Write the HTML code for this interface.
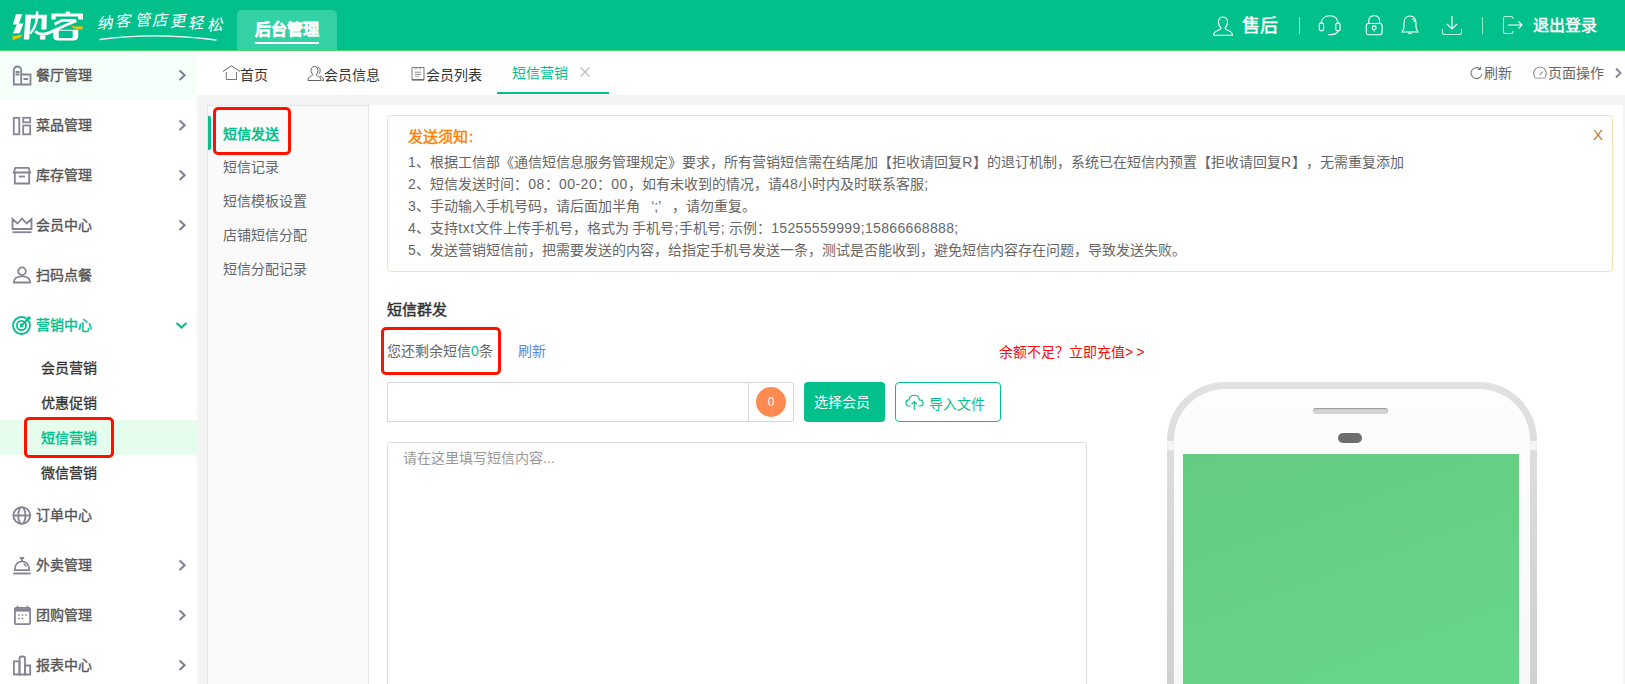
<!DOCTYPE html>
<html lang="zh-CN"><head><meta charset="utf-8">
<style>
*{margin:0;padding:0;box-sizing:border-box}
html,body{text-spacing-trim:space-all;width:1625px;height:684px;overflow:hidden;background:#f4f4f4;font-family:"Liberation Sans",sans-serif;font-size:14px;color:#333}
.a{position:absolute;white-space:nowrap}
#hdr{position:absolute;left:0;top:0;width:1625px;height:50px;background:#02c08c}
#hdrline{position:absolute;left:0;top:50px;width:1625px;height:1px;background:#4ed66c}
#side{position:absolute;left:0;top:51px;width:197px;height:633px;background:#fff}
.mi{position:absolute;left:0;width:197px;height:50px}
.mi .t{position:absolute;left:36px;top:0;line-height:50px;font-size:14px;color:#555;-webkit-text-stroke:0.35px #555}
.mi svg{position:absolute;left:12px;top:15px}
.mi .arr{position:absolute;left:176px;top:19px}
.si{position:absolute;left:0;width:197px;height:35px}
.si .t{position:absolute;left:41px;top:0.5px;line-height:35px;color:#333;-webkit-text-stroke:0.3px #333}
#tabs{position:absolute;left:197px;top:51px;width:1428px;height:44px;background:#fff}
.tab{position:absolute;top:0;height:44px;line-height:44px;color:#333}
#sub{position:absolute;left:207px;top:105px;width:162px;height:579px;background:#fafafa;border:1px solid #e6e6e6;border-bottom:none}
.sb{position:absolute;left:15px;height:34px;line-height:34px;color:#666}
#main{position:absolute;left:369px;top:105px;width:1254px;height:579px;background:#fff}
#notice{position:absolute;left:387px;top:115px;width:1226px;height:157px;border:1px solid #fbdcb4;border-radius:4px;background:#fff}
.nl{position:absolute;left:20px;color:#666;line-height:22px}
.n{letter-spacing:0.5px}
.redbox{position:absolute;border:3px solid #ff1100;border-radius:5px}
</style></head><body>
<div id="hdr">
  <!-- logo -->
  <svg class="a" style="left:0;top:0" width="90" height="50" viewBox="0 0 90 50">
    <g fill="#fff">
      <polygon points="15.9,14.2 22.2,14.2 19,23.4 23.4,23.4 19.6,33.3 13,33.3 16.8,24.6 13,24.6"/>
      <polygon points="25.7,14.8 31.3,14.8 29.1,39.6 23.7,39.6"/>
      <polygon points="25.7,14.8 47,14.8 46.8,18.4 25.7,18.4"/>
      <polygon points="41.7,18.3 46.8,18.3 46.4,29.5 41.3,29.5"/>
      <path d="M37.1 11.2 C37.1 20 36.5 26.5 30.2 33.5" stroke="#fff" stroke-width="2.5" fill="none"/>
      <polygon points="39.9,35.4 45.3,35.4 45.3,39.6 39.9,39.6"/>
      <polygon points="51.4,13.4 83,13.4 83,19.4 78.2,19.4 78.2,16.6 55.6,16.6 55.6,19.4 51.4,19.4"/>
      <polygon points="65.6,11.6 70,11.6 70,13.6 65.6,13.6"/>
      <path d="M54.5 24.2 L62 20.4 L76 20.4" stroke="#fff" stroke-width="2.7" fill="none" stroke-linejoin="round"/>
      <path d="M35 31.2 C39 34.6 45 34.6 50 32.4 C55 30.2 62 26.5 76.5 20.8" stroke="#fff" stroke-width="2.8" fill="none"/>
      <path d="M53.2 29.8 H78.2 V36 C78.2 39 76 40.6 73 40.6 H58 C55 40.6 53.2 39 53.2 36 Z M58.7 30.8 V36.8 C58.7 37.6 59.3 38 60 38 H71.5 C72.3 38 72.7 37.6 72.7 36.8 V30.8 Z" fill-rule="evenodd"/>
    </g>
    <path d="M12.2 36.6 C16 36 19 35.2 22.4 34.6 C22 36.2 21 37.2 19.5 37.8 C17 38.8 14.5 39.6 12.6 40 Z" fill="#f9c000"/>
    <path d="M70.8 25.4 C73.5 26.2 76 26.8 82.9 26.2 L82.2 29.6 C78.5 29.6 75 28.8 73 27.8 Z" fill="#f9c000"/>
  </svg>
  <div class="a" style="left:97.5px;top:14.7px;font-size:15.5px;line-height:16px;color:#fff;transform:skewX(-14deg) rotate(-4deg)">纳</div><div class="a" style="left:115.5px;top:13.0px;font-size:15.5px;line-height:16px;color:#fff;transform:skewX(-14deg) rotate(-4deg)">客</div><div class="a" style="left:135.5px;top:11.7px;font-size:15.5px;line-height:16px;color:#fff;transform:skewX(-14deg) rotate(-4deg)">管</div><div class="a" style="left:153.0px;top:12.1px;font-size:15.5px;line-height:16px;color:#fff;transform:skewX(-14deg) rotate(-4deg)">店</div><div class="a" style="left:170.5px;top:12.6px;font-size:15.5px;line-height:16px;color:#fff;transform:skewX(-14deg) rotate(-4deg)">更</div><div class="a" style="left:189.0px;top:15.1px;font-size:15.5px;line-height:16px;color:#fff;transform:skewX(-14deg) rotate(-4deg)">轻</div><div class="a" style="left:207.5px;top:17.3px;font-size:15.5px;line-height:16px;color:#fff;transform:skewX(-14deg) rotate(-4deg)">松</div>
  <svg class="a" style="left:98px;top:32px" width="122" height="10" viewBox="0 0 122 10"><path d="M2 7.5 Q55 0 118 8" stroke="#fff" stroke-width="1.3" fill="none" stroke-linecap="round"/></svg>
  <div class="a" style="left:237px;top:10px;width:100px;height:40px;background:#35d1a6;border-radius:5px 5px 0 0"></div>
  <div class="a" style="left:255px;top:15px;font-size:16px;font-weight:bold;color:#fff;line-height:30px;-webkit-text-stroke:0.4px #fff">后台管理</div>
  <div class="a" style="left:255px;top:42px;width:64px;height:2px;background:#fff"></div>

  <!-- right icons -->
  <svg class="a" style="left:1212px;top:15px" width="22" height="22" viewBox="0 0 22 22" fill="none" stroke="#fff" stroke-width="1.1">
    <path d="M11 2 C7.5 2 6.5 5 6.5 7.5 C6.5 10 8 12 9 13 C9 14 8 14.5 6 15.5 C3 16.5 1.5 18 1.5 20.3 L20.5 20.3 C20.5 18 19 16.5 16 15.5 C14 14.5 13 14 13 13 C14 12 15.5 10 15.5 7.5 C15.5 5 14.5 2 11 2Z"/>
  </svg>
  <div class="a" style="left:1242px;top:13px;font-size:18px;-webkit-text-stroke:0.45px #fff;color:#fff;line-height:26px">售后</div>
  <div class="a" style="left:1299px;top:17px;width:1px;height:17px;background:#9be6cc"></div>
  <svg class="a" style="left:1300px;top:0" width="100" height="50" viewBox="1300 0 100 50" fill="none" stroke="#fff" stroke-width="1.1">
    <path d="M1321.2 23 V24 C1321.2 19 1324.5 15.8 1329.7 15.8 C1334.9 15.8 1338 19 1338 24 V23"/>
    <rect x="1319.3" y="22.8" width="4.3" height="8" rx="2.1"/>
    <rect x="1335.8" y="22.8" width="4.3" height="8" rx="2.1"/>
    <path d="M1338.3 31 C1337.5 33.5 1335 34.8 1328 34.8"/>
    <path d="M1368.8 23.5 V21 C1368.8 17.8 1371 15.8 1374.2 15.8 C1377.4 15.8 1379.6 17.8 1379.6 21 V23.5"/>
    <rect x="1366.3" y="23.5" width="15.8" height="11.2" rx="2.2"/>
    <circle cx="1374.2" cy="27.8" r="1.9"/>
    <path d="M1374.2 29.7 V31.6"/>
  </svg>
  <svg class="a" style="left:1400px;top:14px" width="20" height="22" viewBox="0 0 20 22" fill="none" stroke="#fff" stroke-width="1.1">
    <path d="M10 2 C6 2 4 5 4 9 V13 C4 15 3 16.5 2 18 H18 C17 16.5 16 15 16 13 V9 C16 5 14 2 10 2Z"/>
    <path d="M8.5 18.5 C8.5 20 11.5 20 11.5 18.5"/>
    <path d="M12.5 4.5 C14 5.5 14.5 7 14.5 8" />
  </svg>
  <svg class="a" style="left:1441px;top:15px" width="22" height="21" viewBox="0 0 22 21" fill="none" stroke="#fff" stroke-width="1.1">
    <path d="M11 1 V14 M6 9 L11 14 L16 9"/>
    <path d="M1.5 14 V17.5 C1.5 19 2.5 19.5 3.5 19.5 H18.5 C19.5 19.5 20.5 19 20.5 17.5 V14" stroke="#b8f0dc"/>
  </svg>
  <div class="a" style="left:1482px;top:17px;width:1px;height:17px;background:#9be6cc"></div>
  <svg class="a" style="left:1502px;top:15px" width="22" height="20" viewBox="0 0 22 20" fill="none" stroke="#fff" stroke-width="1.1">
    <path d="M11 4 V3.5 C11 2.5 10 1.5 9 1.5 H3.5 C2.5 1.5 1.5 2.5 1.5 3.5 V16.5 C1.5 17.5 2.5 18.5 3.5 18.5 H9 C10 18.5 11 17.5 11 16.5 V16" stroke="#b8f0dc"/>
    <path d="M6 10 H20 M16.5 6.5 L20 10 L16.5 13.5"/>
  </svg>
  <div class="a" style="left:1533px;top:13px;font-size:16px;-webkit-text-stroke:0.45px #fff;color:#fff;line-height:26px">退出登录</div>
</div>
<div id="hdrline"></div>

<div id="side">
  <div class="mi" style="top:0;background:#f6fefa;height:49px"></div>
</div>
<!-- menu items (absolute page coords) -->
<div class="mi" style="top:50px">
  <svg style="left:12px;top:15px" width="20" height="21" viewBox="0 0 20 21" fill="none" stroke="#858494" stroke-width="1.8">
    <path d="M1.8 19.5 V5 C1.8 3 3.5 1.5 5.5 1.5 C7.5 1.5 9.2 3 9.2 5 V19.5 Z"/>
    <path d="M9.2 9.5 H18.5 V19.5 H9.2"/>
    <path d="M3.5 7 H7.5 M3.5 9.5 H7.5 M11.5 14 H16"/>
  </svg>
  <div class="t">餐厅管理</div>
  <svg class="arr" width="12" height="13" viewBox="0 0 12 13"><path d="M3.6 1.6 L8.6 6.3 L3.6 11" stroke="#7d8090" stroke-width="2.1" fill="none"/></svg>
</div>
<div class="mi" style="top:100px">
  <svg style="left:12px;top:16px" width="20" height="20" viewBox="0 0 20 20" fill="none" stroke="#858494" stroke-width="1.8">
    <rect x="1.8" y="1.8" width="5.5" height="16.5"/>
    <rect x="11.2" y="1.8" width="7" height="4.5"/>
    <rect x="11.2" y="9.5" width="7" height="8.8"/>
  </svg>
  <div class="t">菜品管理</div>
  <svg class="arr" width="12" height="13" viewBox="0 0 12 13"><path d="M3.6 1.6 L8.6 6.3 L3.6 11" stroke="#7d8090" stroke-width="2.1" fill="none"/></svg>
</div>
<div class="mi" style="top:150px">
  <svg style="left:12px;top:16px" width="20" height="20" viewBox="0 0 20 20" fill="none" stroke="#858494" stroke-width="1.8">
    <path d="M1.8 6.5 L3.5 1.8 H16.5 L18.2 6.5 Z"/>
    <path d="M2.8 6.5 V17.5 H17.2 V6.5"/>
    <path d="M7 10.5 H13"/>
  </svg>
  <div class="t">库存管理</div>
  <svg class="arr" width="12" height="13" viewBox="0 0 12 13"><path d="M3.6 1.6 L8.6 6.3 L3.6 11" stroke="#7d8090" stroke-width="2.1" fill="none"/></svg>
</div>
<div class="mi" style="top:200px">
  <svg style="left:11px;top:17px" width="22" height="17" viewBox="0 0 22 17" fill="none" stroke="#858494" stroke-width="1.8">
    <path d="M1.5 12 V2 L6.5 6.5 L11 1.5 L15.5 6.5 L20.5 2 V12 Z"/>
    <path d="M1.5 15.2 H20.5"/>
  </svg>
  <div class="t">会员中心</div>
  <svg class="arr" width="12" height="13" viewBox="0 0 12 13"><path d="M3.6 1.6 L8.6 6.3 L3.6 11" stroke="#7d8090" stroke-width="2.1" fill="none"/></svg>
</div>
<div class="mi" style="top:250px">
  <svg style="left:12px;top:16px" width="20" height="18" viewBox="0 0 20 18" fill="none" stroke="#858494" stroke-width="1.8">
    <circle cx="10" cy="5.2" r="3.8"/>
    <path d="M1.8 16.5 C1.8 12 5.5 10.3 10 10.3 C14.5 10.3 18.2 12 18.2 16.5 Z"/>
  </svg>
  <div class="t">扫码点餐</div>
</div>
<div class="mi" style="top:300px">
  <svg style="left:11px;top:14px" width="22" height="22" viewBox="0 0 22 22" fill="none" stroke="#02c08c" stroke-width="1.8">
    <circle cx="10.5" cy="11.5" r="8.5"/>
    <circle cx="10.5" cy="11.5" r="4.6"/>
    <circle cx="10.5" cy="11.5" r="1" fill="#02c08c"/>
    <path d="M10.5 11.5 L18.5 3.5 M16.5 3 L18.5 3.5 L19 5.5" stroke-width="1.8"/>
  </svg>
  <div class="t" style="color:#02c08c;-webkit-text-stroke:0.4px #02c08c">营销中心</div>
  <svg class="arr" style="left:175px;top:21px" width="13" height="9" viewBox="0 0 13 9"><path d="M1.5 2 L6.5 6.5 L11.5 2" stroke="#02c08c" stroke-width="2.2" fill="none"/></svg>
</div>
<div class="si" style="top:350px"><div class="t">会员营销</div></div>
<div class="si" style="top:385px"><div class="t">优惠促销</div></div>
<div class="si" style="top:420px;background:#e6fcec"><div class="t" style="color:#02c08c;-webkit-text-stroke:0.4px #02c08c">短信营销</div></div>
<div class="si" style="top:455px"><div class="t">微信营销</div></div>
<div class="redbox" style="left:24px;top:417px;width:90px;height:41px"></div>
<div class="mi" style="top:490px">
  <svg style="left:11px;top:15px" width="22" height="22" viewBox="0 0 22 22" fill="none" stroke="#858494" stroke-width="1.9">
    <circle cx="10.8" cy="10.5" r="8.4"/>
    <ellipse cx="10.8" cy="10.5" rx="3.6" ry="8.4"/>
    <path d="M2.4 10.5 H19.2"/>
  </svg>
  <div class="t">订单中心</div>
</div>
<div class="mi" style="top:540px">
  <svg style="left:11px;top:12px" width="22" height="24" viewBox="0 0 22 24" fill="none" stroke="#858494" stroke-width="1.8">
    <path d="M3.8 18.2 C3.8 12.5 7 9.3 11 9.3 C15 9.3 18.2 12.5 18.2 18.2 Z"/>
    <path d="M2.3 21.5 H19.7" stroke-width="1.9"/>
    <path d="M11 6 V9.3 M8.8 6 H13.2"/>
    <path d="M12.6 11.8 C13.8 12.3 14.8 13.3 15.3 14.5" stroke-width="1.5"/>
  </svg>
  <div class="t">外卖管理</div>
  <svg class="arr" width="12" height="13" viewBox="0 0 12 13"><path d="M3.6 1.6 L8.6 6.3 L3.6 11" stroke="#7d8090" stroke-width="2.1" fill="none"/></svg>
</div>
<div class="mi" style="top:590px">
  <svg style="left:12px;top:14px" width="22" height="22" viewBox="0 0 22 22" fill="none" stroke="#858494" stroke-width="1.8">
    <rect x="2.9" y="3.9" width="15.2" height="16.2" rx="1.2"/>
    <path d="M2.9 6 H18.1" stroke-width="3.2"/>
    <path d="M5.5 1.8 V4.5 M15.5 1.8 V4.5" stroke-width="1.6"/>
    <path d="M6.2 11 H7.8 M9.7 11 H11.3 M13.2 11 H14.8 M6.2 14.5 H7.8 M9.7 14.5 H11.3" stroke-width="1.7"/>
  </svg>
  <div class="t">团购管理</div>
  <svg class="arr" width="12" height="13" viewBox="0 0 12 13"><path d="M3.6 1.6 L8.6 6.3 L3.6 11" stroke="#7d8090" stroke-width="2.1" fill="none"/></svg>
</div>
<div class="mi" style="top:640px">
  <svg style="left:11px;top:14px" width="22" height="22" viewBox="0 0 22 22" fill="none" stroke="#858494" stroke-width="1.8">
    <path d="M2.9 20.5 V7.4 H8.5 V20.5 Z"/>
    <path d="M8.5 20.5 V4.5 C8.5 3.3 9.3 2.5 10.5 2.5 H12 C13.2 2.5 14 3.3 14 4.5 V20.5 Z"/>
    <path d="M14 20.5 V11.5 H19.2 V20.5 Z"/>
  </svg>
  <div class="t">报表中心</div>
  <svg class="arr" width="12" height="13" viewBox="0 0 12 13"><path d="M3.6 1.6 L8.6 6.3 L3.6 11" stroke="#7d8090" stroke-width="2.1" fill="none"/></svg>
</div>

<div id="tabs"></div>
<svg class="a" style="left:222px;top:64px" width="18" height="17" viewBox="0 0 18 17" fill="none" stroke="#666" stroke-width="1">
  <path d="M1 7.5 L9.5 1.8 L18 7.5"/><path d="M4.3 8 V15.5 H14.5 V8" stroke="#777"/>
</svg>
<div class="a tab" style="left:240px;top:52.5px">首页</div>
<svg class="a" style="left:307px;top:65px" width="18" height="17" viewBox="0 0 18 17" fill="none" stroke="#666" stroke-width="1">
  <path d="M7.5 1.5 C5 1.5 4 3.5 4 5.5 C4 7.5 5 8.8 6 9.5 C6 10.3 5 10.8 3.5 11.3 C1.8 12 1 13.5 1 15.5 H14 C14 13.5 13.2 12 11.5 11.3 C10 10.8 9 10.3 9 9.5 C10 8.8 11 7.5 11 5.5 C11 3.5 10 1.5 7.5 1.5Z"/>
  <path d="M10.5 1.8 C12.5 2.3 13.2 4 13.2 5.5 C13.2 7.3 12.5 8.5 11.5 9.3 M13 11 C15 11.5 16.5 13 16.5 15.5 H15"/>
</svg>
<div class="a tab" style="left:324px;top:52.5px">会员信息</div>
<svg class="a" style="left:411px;top:66px" width="14" height="15" viewBox="0 0 14 15" fill="none" stroke="#777" stroke-width="1">
  <path d="M1 1.5 H13 V13.8 H1 Z"/>
  <path d="M1 13.8 H13" stroke="#666" stroke-width="1.3"/>
  <path d="M4 3.6 L5.8 1.8 H8.2 L10 3.6" stroke="#9a8aa8"/>
  <path d="M3.8 6.2 H10 M3.8 8.4 H10" stroke="#888"/>
  <path d="M3.8 10.5 H8" stroke="#aaa"/>
</svg>
<div class="a tab" style="left:426px;top:52.5px">会员列表</div>
<div class="a tab" style="left:512px;top:51px;color:#02c08c">短信营销</div>
<svg class="a" style="left:579px;top:66px" width="12" height="12" viewBox="0 0 12 12"><path d="M1.5 1.5 L10.5 10.5 M10.5 1.5 L1.5 10.5" stroke="#bbb" stroke-width="1.1"/></svg>
<div class="a" style="left:497px;top:92px;width:112px;height:2px;background:#02c08c"></div>
<svg class="a" style="left:1470px;top:66px" width="14" height="14" viewBox="0 0 14 14" fill="none" stroke="#777" stroke-width="1.1">
  <path d="M12 8 A5.5 5.5 0 1 1 10 2.8"/>
  <path d="M10.5 0.8 V3.5 H7.8"/>
</svg>
<div class="a tab" style="left:1484px;top:51px;color:#666">刷新</div>
<svg class="a" style="left:1532px;top:65px" width="16" height="16" viewBox="0 0 16 16" fill="none" stroke="#888" stroke-width="1.1">
  <path d="M2.9 12 A6.3 6.3 0 1 1 13.1 12"/>
  <path d="M2.3 13.2 H13.7" stroke="#c4c4c4" stroke-width="1.8"/>
  <path d="M7.8 10 L10.6 6.6"/>
</svg>
<div class="a tab" style="left:1548px;top:51px;color:#666">页面操作</div>
<svg class="a" style="left:1613px;top:67px" width="10" height="12" viewBox="0 0 10 12"><path d="M3 1.5 L7.5 6 L3 10.5" stroke="#8a8799" stroke-width="2" fill="none"/></svg>

<div id="sub"></div>
<div class="a" style="left:208px;top:116px;width:3px;height:34px;background:#02c08c;border-radius:0 2px 2px 0"></div>
<div class="a sb" style="left:223px;top:117px;color:#02c08c;font-weight:bold">短信发送</div>
<div class="a sb" style="left:223px;top:150px">短信记录</div>
<div class="a sb" style="left:223px;top:184px">短信模板设置</div>
<div class="a sb" style="left:223px;top:218px">店铺短信分配</div>
<div class="a sb" style="left:223px;top:252px">短信分配记录</div>
<div class="redbox" style="left:213px;top:107px;width:78px;height:48px"></div>

<div id="main"></div>
<div id="notice"></div>
<div class="a" style="left:408px;top:126px;line-height:22px;font-size:15px;color:#ff7f00;-webkit-text-stroke:0.45px #ff7f00">发送须知<span style="margin-left:1px">:</span></div>
<div class="a" style="left:1593px;top:124px;line-height:22px;color:#c07a38;font-size:15px">X</div>
<div class="a nl" style="left:408px;top:151px"><span class="n">1</span>、根据工信部《通信短信息服务管理规定》要求，所有营销短信需在结尾加【拒收请回复<span class="n">R</span>】的退订机制，系统已在短信内预置【拒收请回复<span class="n">R</span>】，无需重复添加</div>
<div class="a nl" style="left:408px;top:173px"><span class="n">2</span>、短信发送时间：<span class="n">08</span>：<span class="n">00-20</span>：<span class="n">00</span>，如有未收到的情况，请<span class="n">48</span>小时内及时联系客服<span class="n">;</span></div>
<div class="a nl" style="left:408px;top:195px"><span class="n">3</span>、手动输入手机号码，请后面加半角 <span style="margin-left:7px">‘;’</span> <span style="margin-left:7px">，</span>请勿重复。</div>
<div class="a nl" style="left:408px;top:217px"><span class="n">4</span>、支持<span class="n">txt</span>文件上传手机号，格式为 手机号<span class="n">;</span>手机号<span class="n">;</span> 示例：<span class="n" style="letter-spacing:0.35px">15255559999;15866668888;</span></div>
<div class="a nl" style="left:408px;top:239px"><span class="n">5</span>、发送营销短信前，把需要发送的内容，给指定手机号发送一条，测试是否能收到，避免短信内容存在问题，导致发送失败。</div>

<div class="a" style="left:387px;top:299px;line-height:22px;font-size:15px;color:#333;-webkit-text-stroke:0.45px #333">短信群发</div>
<div class="a" style="left:387px;top:340px;line-height:22px;color:#666">您还剩余短信<span style="color:#02c08c">0</span>条</div>
<div class="redbox" style="left:381px;top:327px;width:120px;height:48px"></div>
<div class="a" style="left:518px;top:340px;line-height:22px;color:#5b85e6">刷新</div>
<div class="a" style="left:999px;top:341px;line-height:22px;color:#fa0a0a">余额不足？立即充值<span style="letter-spacing:3px">&gt;&gt;</span></div>

<div class="a" style="left:387px;top:382px;width:407px;height:40px;border:1px solid #d6d6d6;border-radius:0 3px 3px 0;background:#fff"></div>
<div class="a" style="left:748px;top:383px;width:1px;height:38px;background:#d6d6d6"></div>
<div class="a" style="left:756px;top:387px;width:30px;height:30px;border-radius:50%;background:#fd8a4f;color:#fff;font-size:12px;line-height:31px;text-align:center">0</div>
<div class="a" style="left:804px;top:382px;width:81px;height:40px;background:#02c08c;border-radius:4px;color:#fff;line-height:40px;text-align:center;padding-right:6px">选择会员</div>
<div class="a" style="left:895px;top:382px;width:106px;height:40px;border:1px solid #02c08c;border-radius:4px;background:#fff"></div>
<svg class="a" style="left:905px;top:394px" width="20" height="17" viewBox="0 0 20 17" fill="none" stroke="#02c08c" stroke-width="1.1">
  <path d="M5.5 12 H4.2 C2.3 12 1 10.6 1 8.9 C1 7.2 2.3 5.9 4 5.9 C4.3 3.2 6.3 1.3 9.2 1.3 C12 1.3 14.1 3.3 14.3 5.9 C16.3 5.9 18 7.2 18 9 C18 10.8 16.6 12 14.8 12 H13.2"/>
  <path d="M9.3 16 V7.5 M6.5 10.3 L9.3 7.5 L12.1 10.3"/>
</svg>
<div class="a" style="left:929px;top:393px;line-height:22px;color:#02c08c">导入文件</div>

<div class="a" style="left:387px;top:442px;width:700px;height:250px;border:1px solid #ddd;border-radius:3px;background:#fff"></div>
<div class="a" style="left:403px;top:447px;line-height:22px;color:#999">请在这里填写短信内容...</div>

<!-- phone -->
<div class="a" style="left:1167px;top:382px;width:370px;height:400px;border-radius:58px 58px 0 0;background:linear-gradient(#e2e2e2,#d2d2d2 60%,#cfcfcf)"></div>
<div class="a" style="left:1174px;top:389px;width:356px;height:400px;border-radius:51px 51px 0 0;background:linear-gradient(#fdfdfd,#f7f7f7)"></div>
<div class="a" style="left:1167px;top:441px;width:7px;height:9px;background:#f4f4f4"></div>
<div class="a" style="left:1530px;top:441px;width:7px;height:9px;background:#f4f4f4"></div>
<div class="a" style="left:1313px;top:408px;width:75px;height:6px;border-radius:3px;background:#d4d4d4;box-shadow:inset 0 1px 1px #999"></div>
<div class="a" style="left:1338px;top:433px;width:24px;height:10px;border-radius:5px;background:#6d6d6d"></div>
<div class="a" style="left:1183px;top:454px;width:336px;height:240px;background:linear-gradient(160deg,#65cb80,#68d68b)"></div>
</body></html>
